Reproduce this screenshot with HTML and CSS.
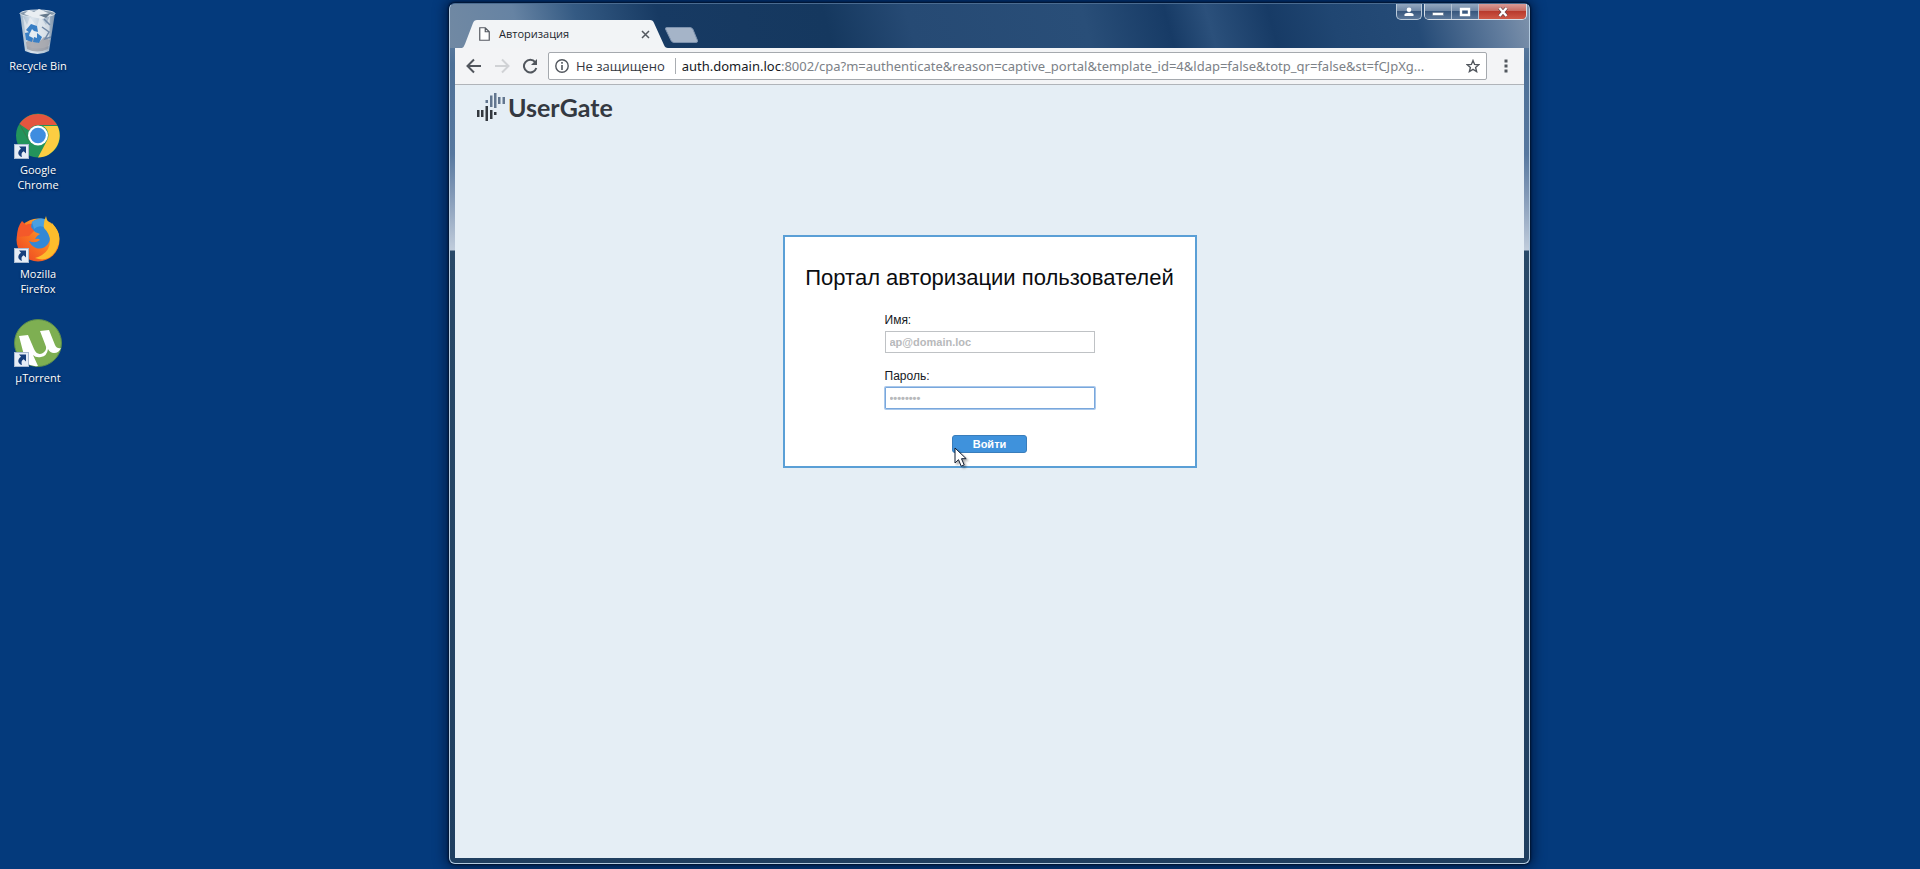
FILE: index.html
```html
<!DOCTYPE html>
<html lang="ru">
<head>
<meta charset="utf-8">
<title>Авторизация</title>
<link rel="stylesheet" href="styles.css">
</head>
<body>
<svg class="defs" aria-hidden="true">
  <defs>
    <symbol id="shortcut" viewBox="0 0 15 15">
      <rect x=".5" y=".5" width="14" height="14" fill="#e6edf6" stroke="#a9bad0"/>
      <path d="M5 2.500h7v7l-2.300-2.200c-2.200 1.200-2.700 3-1.700 5.700C3.500 11.500 3 7.500 7 4.700z" fill="#173f7c"/>
    </symbol>
    <linearGradient id="glass" x1="0" x2="1">
      <stop offset="0" stop-color="#9eb4c8"/><stop offset=".35" stop-color="#dce5ed"/><stop offset=".7" stop-color="#b9c9d8"/><stop offset="1" stop-color="#7c91a9"/>
    </linearGradient>
    <linearGradient id="flame" x1="0" y1="1" x2="1" y2="0">
      <stop offset="0" stop-color="#e93c24"/><stop offset=".5" stop-color="#fb7b22"/><stop offset="1" stop-color="#ffcc38"/>
    </linearGradient>
  </defs>
</svg>
<main class="desktop">
  <nav class="icons" aria-label="Desktop">
    <a class="icon" href="#">
      <svg class="icon-art" viewBox="0 0 48 48">
        <path d="M6 6l5 38q13 6 24 0l6-38z" fill="url(#glass)"/>
        <path d="M9 9l4 9 3-8 7 10 3-11 6 9 4-10-1 31q-12 5-22 0z" fill="#f4f6f8" opacity=".55"/>
        <path d="M12 35l7-4 5 5 6-6 6 3-2 9q-11 5-21 0z" fill="#8d8c92" opacity=".65"/>
        <path d="M28 20l7 5-4 7 6-2M30 12l6 6" fill="none" stroke="#7088a6" stroke-width="1.500"/>
        <ellipse cx="23.500" cy="6.500" rx="17.500" ry="3.500" fill="#879aac" stroke="#d6e0e9"/>
        <path d="M10 7l5-4 5 2 5-3 9 4 4 2-10 4-10-2z" fill="#e9eef2"/>
        <path d="M25 8l12-2-5 5z" fill="#65798c"/>
        <path d="M12 23l5-6 6 2 1 6-4-1-2-2-2 4zM23 26l5 4-3 6-6-1 1-5 3 1zM18 35l-6-2-1-7 5-1-1 4 4 2z" fill="#397fc5"/>
      </svg>
      <span class="icon-label">Recycle Bin</span>
    </a>
    <a class="icon" href="#">
      <svg class="icon-art" viewBox="0 0 48 48">
        <circle cx="24" cy="24.500" r="22" fill="#23945b"/>
        <path d="M5.500 13A22 22 0 0 1 43 14H24a10.500 10.500 0 0 0-9 5.500z" fill="#e4553f"/>
        <path d="M43.500 15A22 22 0 0 1 24 46.500l9-17A10.500 10.500 0 0 0 29 15z" fill="#fccd42"/>
        <path d="M5.500 13l9.300 16.500" stroke="#3b7948" stroke-width="1"/>
        <circle cx="24" cy="24.500" r="10" fill="#fff"/><circle cx="24" cy="24.500" r="7.800" fill="#3f8de0"/>
        <use href="#shortcut" x="0" y="33" width="15" height="15"/>
      </svg>
      <span class="icon-label">Google<br>Chrome</span>
    </a>
    <a class="icon" href="#">
      <svg class="icon-art" viewBox="0 0 48 48">
        <circle cx="24" cy="25" r="21.500" fill="url(#flame)"/>
        <path d="M3 22Q3 12 8 6l4 4q3-2 6-1l3-4 2 8-8 8z" fill="#f4592a"/>
        <path d="M18 7q6-5 13-3l4 11q3 8-1 14-5 6-12 4-5-2-7-7 6 3 11-1-1-2-5-1 1-3 5-5l-5-2-4-5z" fill="#3288d6"/>
        <path d="M18 7q6-5 13-3l1 9q-7-4-12 1z" fill="#4aa0e2"/>
        <path d="M32 1q-3 7-2 12 6 6 6 13 0 9-8 14-3 2-7 3 14 5 21-8 7-13-1-23l-3-4-1 2q-4-3-5-9z" fill="#fdbd2c"/>
        <use href="#shortcut" x="0" y="33" width="15" height="15"/>
      </svg>
      <span class="icon-label">Mozilla<br>Firefox</span>
    </a>
    <a class="icon" href="#">
      <svg class="icon-art" viewBox="0 0 48 48">
        <circle cx="24" cy="24" r="23.500" fill="#7eaf52" stroke="#5a8b4e"/>
        <path d="M5 17l9-1 6 14q3 7 9 4 5-3 2-9l-5-13 9-1 6 15q2 4 6 3-2 5-7 5-4 0-6-4-1 7-7 8-5 1-8-2l5 11q-6 1-12-3z" fill="#fff"/>
        <use href="#shortcut" x="0" y="33" width="15" height="15"/>
      </svg>
      <span class="icon-label">µTorrent</span>
    </a>
  </nav>

  <section class="window">
    <header class="titlebar">
      <div class="tab">
        <svg class="tab-shape" viewBox="0 0 206 28" preserveAspectRatio="none"><path d="M0 28Q2 27 3 24L11 3Q12 0 15 0H188Q191 0 192 3L202 25Q203 28 206 28z" fill="#f2f4f6"/></svg>
        <svg class="tab-page" viewBox="0 0 11 14"><path d="M.75.75h5.500l4 4v8.500H.75zM6.250.75v4h4" fill="#fff" stroke="#555a61" stroke-width="1.200"/></svg>
        <span class="tab-title">Авторизация</span>
        <button class="tab-close" aria-label="Закрыть вкладку"><svg viewBox="0 0 9 9"><path d="M1 1l7 7M8 1L1 8" stroke="#53585f" stroke-width="1.500"/></svg></button>
      </div>
      <button class="new-tab" aria-label="Новая вкладка"><svg viewBox="0 0 33 16"><path d="M2 .5h23q2 0 3 2l4.500 11q.5 2-1.500 2H9q-2 0-3-2L.5 2Q0 .5 2 .5z" fill="#a5b4c8" stroke="#7d92ae"/></svg></button>
      <div class="controls">
        <button class="control profile" aria-label="Профиль"><svg viewBox="0 0 12 10"><circle cx="6" cy="2.800" r="2.300" fill="#fff"/><path d="M1.500 9V7.500Q2 5.700 6 5.700t4.500 1.800V9z" fill="#fff"/></svg></button>
        <div class="control-group">
          <button class="control minimize" aria-label="Свернуть"><svg viewBox="0 0 12 10"><rect x=".5" y="5.500" width="11" height="3" fill="#fff" stroke="#53657c" stroke-width=".5"/></svg></button>
          <button class="control maximize" aria-label="Развернуть"><svg viewBox="0 0 12 10"><path d="M2 2h8v6H2z" fill="none" stroke="#fff" stroke-width="2.400"/></svg></button>
          <button class="control close" aria-label="Закрыть"><svg viewBox="0 0 12 10"><path d="M2.500 1l7 8M9.500 1l-7 8" stroke="#65444a" stroke-width="3.600"/><path d="M2.500 1l7 8M9.500 1l-7 8" stroke="#fff" stroke-width="2.400"/></svg></button>
        </div>
      </div>
    </header>
    <div class="client">
      <div class="toolbar">
        <button class="tool" aria-label="Назад"><svg viewBox="0 0 16 16"><path d="M15 8H2M8 1.500L1.500 8 8 14.500" fill="none" stroke="#51565d" stroke-width="2"/></svg></button>
        <button class="tool" aria-label="Вперёд" disabled><svg viewBox="0 0 16 16"><path d="M1 8h13M8 1.500L14.500 8 8 14.500" fill="none" stroke="#d0d2d5" stroke-width="2"/></svg></button>
        <button class="tool reload" aria-label="Обновить"><svg viewBox="0 0 16 16"><path d="M13.200 4.200A6.300 6.300 0 1 0 14.300 10" fill="none" stroke="#51565d" stroke-width="2"/><path d="M15 1v6H9z" fill="#51565d"/></svg></button>
        <div class="address">
          <svg class="info" viewBox="0 0 14 14"><circle cx="7" cy="7" r="6.200" fill="none" stroke="#51565d" stroke-width="1.400"/><path d="M7 6v5M7 3v1.700" stroke="#51565d" stroke-width="1.600"/></svg>
          <span class="insecure">Не защищено</span>
          <span class="url"><span class="host">auth.domain.loc</span>:8002/cpa?m=authenticate&amp;reason=captive_portal&amp;template_id=4&amp;ldap=false&amp;totp_qr=false&amp;st=fCJpXg...</span>
          <button class="star" aria-label="В закладки"><svg viewBox="0 0 14 14"><path d="M7 1.500l1.600 3.900 4.200.3-3.200 2.700 1 4.100L7 10.300l-3.600 2.200 1-4.100-3.200-2.700 4.200-.3z" fill="none" stroke="#51565d" stroke-width="1.400"/></svg></button>
        </div>
        <button class="menu" aria-label="Меню"><svg viewBox="0 0 4 14"><path d="M.5.500h3v3h-3zM.5 5.500h3v3h-3zM.5 10.500h3v3h-3z" fill="#51565d"/></svg></button>
      </div>
      <div class="page">
        <div class="brand">
          <svg class="brand-mark" viewBox="0 0 28 28"><g fill="#33383f"><path d="M0 17h2.500v7H0zM4 17h2.500v7H4zM8.500 13H11v15H8.500zM13 17h2.500v9H13z"/><path d="M17 19h2.500v3H17z"/></g><g fill="#62768f"><path d="M8.500 7H11v3H8.500zM13 2.500h2.500V14H13zM17 0h2.500v15H17zM21 4h2.500v7H21zM25.500 4H28v7h-2.500z"/></g></svg>
          <span class="brand-name">UserGate</span>
        </div>
        <form class="login">
          <h1 class="login-title">Портал авторизации пользователей</h1>
          <div class="fields">
            <label class="label" for="name">Имя:</label>
            <input class="field" id="name" type="text" value="ap@domain.loc">
            <label class="label" for="password">Пароль:</label>
            <input class="field active" id="password" type="password" value="password">
          </div>
          <div class="submit-wrap">
            <button class="submit" type="button">Войти</button>
            <svg class="cursor" viewBox="0 0 14 21"><path d="M1 1v15l3.500-3.300 2.700 6.500 3-1.300-2.700-6.200h4.700z" fill="#fff" stroke="#111c31"/></svg>
          </div>
        </form>
      </div>
    </div>
  </section>
</main>
</body>
</html>
```

FILE: styles.css
```css
* { box-sizing: border-box; }
body { margin: 0; font-family: "Open Sans", "Noto Sans", sans-serif; }
button { padding: 0; border: 0; background: none; font: inherit; }
svg { display: block; }
.defs { position: absolute; width: 0; height: 0; }

.desktop { position: relative; height: 100vh; overflow: hidden; background: #043a7c; }
.icons { display: flex; flex-direction: column; width: 76px; padding-top: 7px; }
.icon { display: flex; flex-direction: column; align-items: center; gap: 3px; height: 104px; color: #fff; text-decoration: none; }
.icon-art { width: 48px; height: 48px; }
.icon-label { font-size: 11px; line-height: 15px; text-align: center; text-shadow: 0 1px 2px #001c45; }

.window {
  position: absolute; top: 3px; right: 390px; bottom: 5px; left: 449px;
  display: flex; flex-direction: column;
  padding: 0 5px 5px;
  border: 1px solid #b4cbe0; border-top-color: #4a6b90; border-radius: 6px;
  background: linear-gradient(#6f88a5 0, #4d7097 60px, #57789f 150px, #8198b6 190px, #c0ccdb 246px, #294968 247px, #203f60 100%);
  box-shadow: 0 0 2px 1px #00122e, 0 0 12px 4px #00204d;
}
.titlebar {
  display: flex; align-items: flex-end; height: 44px; margin: 0 -5px; padding-left: 12px;
  border-radius: 5px 5px 0 0;
  background: linear-gradient(75deg, #7189a3 0, #6683a3 70px, #345a83 130px, #173a63 210px, #15385f 370px, #264a74 450px, #294e78 620px, #173b66 700px, #2b507b 740px, #173b66 800px, #204672 860px, #254b77 940px, #627d9e 1020px, #7f93ac 100%);
}
.tab { position: relative; display: flex; align-items: center; width: 206px; height: 28px; padding: 0 18px 0 17px; }
.tab-shape { position: absolute; inset: 0; width: 100%; height: 100%; }
.tab-page { position: relative; width: 11px; height: 14px; }
.tab-title { position: relative; flex: 1; padding-left: 9px; font-size: 11px; line-height: 16px; color: #23272d; }
.tab-close { position: relative; }
.tab-close svg { width: 9px; height: 9px; }
.new-tab { align-self: flex-end; margin-bottom: 5px; margin-left: -3px; }
.new-tab svg { width: 33px; height: 16px; }

.controls { display: flex; align-self: flex-start; gap: 2px; margin-right: 2px; margin-left: auto; }
.control { display: grid; place-items: center; height: 15px; background: linear-gradient(#93a7bf 0, #6f87a5 45%, #38577e 50%, #5b7799 100%); }
.control svg { width: 12px; height: 10px; }
.profile { width: 26px; height: 16px; border: 1px solid #bacada; border-top: 0; border-radius: 0 0 5px 5px; }
.control-group { display: flex; height: 16px; overflow: hidden; border: 1px solid #d6dee7; border-top: 0; border-radius: 0 0 5px 5px; }
.minimize, .maximize { width: 27px; border-right: 1px solid #b2c1d2; }
.close { width: 47px; background: linear-gradient(#d99b96 0, #c76c63 45%, #b93a2d 50%, #cf5947 100%); }

.client { display: flex; flex: 1; flex-direction: column; min-height: 0; }
.toolbar { display: flex; align-items: center; height: 37px; padding: 0 16px 0 11px; border-bottom: 1px solid #b0b4b9; background: #f3f4f6; }
.tool { margin-right: 12px; }
.reload { margin-right: 10px; }
.tool svg { width: 16px; height: 16px; }
.address { display: flex; flex: 1; align-items: center; min-width: 0; height: 28px; padding: 0 6px; border: 1px solid #a5a9ae; border-radius: 2px; background: #fff; font-size: 13px; line-height: 20px; white-space: nowrap; }
.info { flex: none; width: 14px; height: 14px; margin-right: 7px; }
.insecure { padding-right: 10px; border-right: 1px solid #a9adb2; color: #33383f; line-height: 16px; }
.url { flex: 1; min-width: 0; padding-left: 6px; overflow: hidden; color: #7c8187; font-family: "Noto Sans", "Open Sans", sans-serif; }
.host { color: #16191e; }
.star svg { width: 14px; height: 14px; }
.menu { margin-left: 17px; }
.menu svg { width: 4px; height: 14px; }

.page { flex: 1; background: #e5eef5; }
.brand { display: flex; gap: 3px; padding: 8px 21px 0 22px; }
.brand-mark { width: 28px; height: 28px; }
.brand-name { font: 700 25px/28px Lato, sans-serif; color: #343941; }

.login { width: 414px; margin: 114px auto 0; padding: 27px 0 13px; border: 2px solid #5a9fd6; background: #fff; font-family: "Liberation Sans", Arial, sans-serif; }
.login-title { margin: 0; font-size: 22px; font-weight: 400; line-height: 28px; text-align: center; color: #0b0d10; }
.fields { display: flex; flex-direction: column; width: 210px; margin: 20px auto 0; }
.label { padding-bottom: 3px; font-size: 12px; line-height: 16px; color: #16191e; }
.field { height: 22px; margin-bottom: 15px; padding: 0 4px; border: 1px solid #bfc2c5; outline: 0; background: #fff; color: #b7b9bb; font: 700 11px/16px "Liberation Sans", Arial, sans-serif; }
.active { border-color: #79a7dc; border-radius: 1px; box-shadow: 0 0 0 1px #a9c8eb; }
.submit-wrap { position: relative; width: 75px; margin: 11px auto 0; }
.submit { display: block; width: 100%; height: 18px; border: 1px solid #397dbb; border-radius: 3px; background: #3f92dc; color: #fff; font-size: 11px; font-weight: 700; line-height: 16px; }
.cursor { position: absolute; top: 12px; left: 2px; width: 14px; height: 21px; filter: drop-shadow(2px 2px 1px #0005); }
```
